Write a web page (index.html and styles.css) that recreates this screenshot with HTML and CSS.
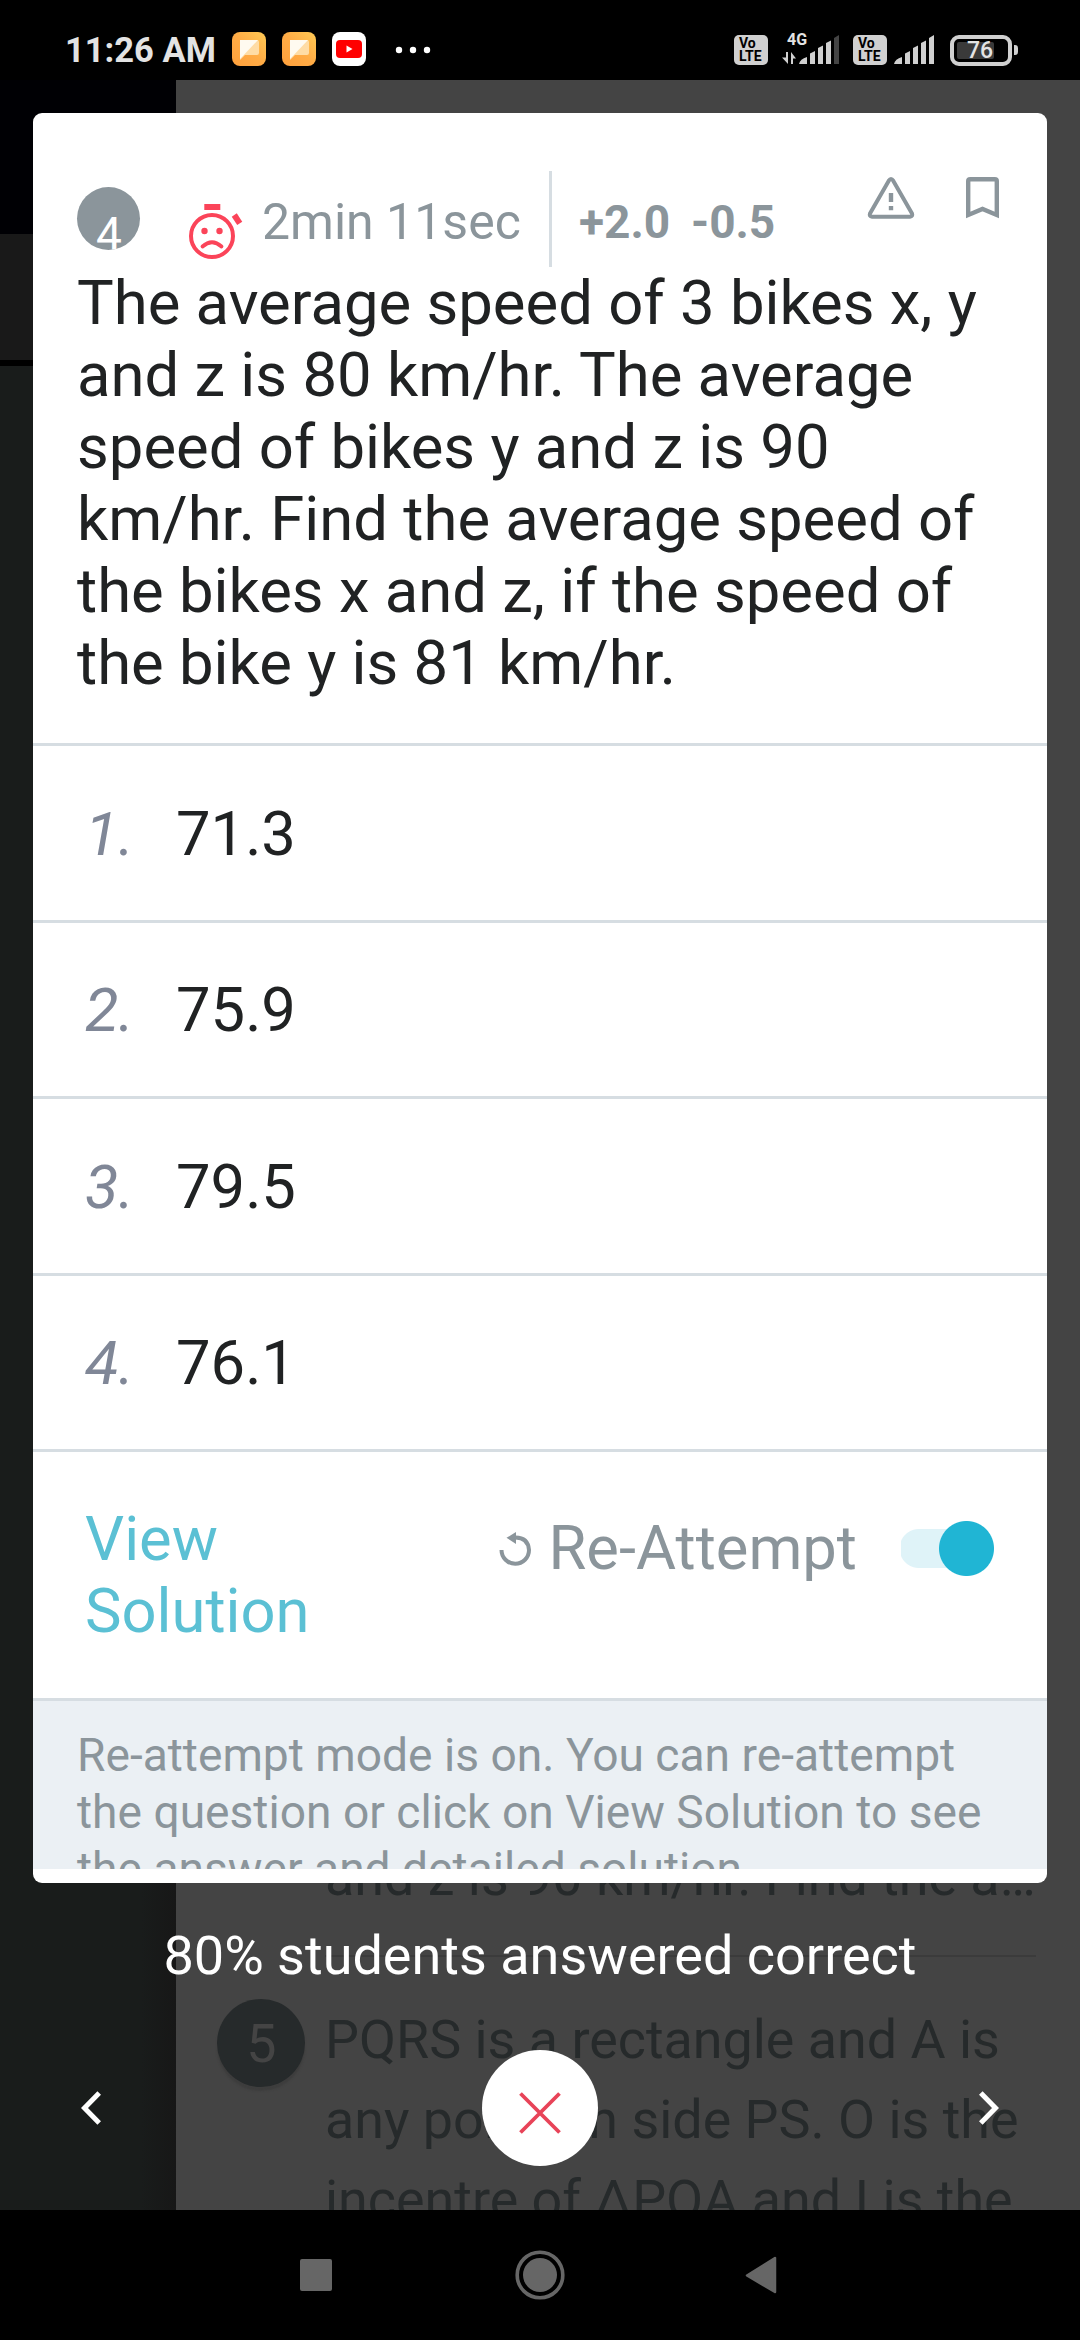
FILE: index.html
```html
<!DOCTYPE html>
<html lang="en">
<head>
<meta charset="utf-8">
<title>Question 4</title>
<link rel="stylesheet" href="styles.css">
</head>
<body>
<div class="screen">
  <header class="status">
    <span class="clock">11:26 AM</span>
    <svg class="app-icon" viewBox="0 0 34 34"><defs><linearGradient id="g" x1="1" y1="0" x2="0" y2="1"><stop offset="0" stop-color="#ffca55"/><stop offset=".5" stop-color="#ffab45"/><stop offset="1" stop-color="#ffa03c"/></linearGradient></defs><rect width="34" height="34" rx="8" fill="url(#g)"/><path d="M8 8H25a2 2 0 0 1 2 2V21a2 2 0 0 1-2 2H13L8 28Z" fill="#ffdca5"/><path d="M8 8H26L8 27Z" fill="#fffaf0"/></svg>
    <svg class="app-icon" viewBox="0 0 34 34"><rect width="34" height="34" rx="8" fill="url(#g)"/><path d="M8 8H25a2 2 0 0 1 2 2V21a2 2 0 0 1-2 2H13L8 28Z" fill="#ffdca5"/><path d="M8 8H26L8 27Z" fill="#fffaf0"/></svg>
    <svg class="app-icon" viewBox="0 0 34 34"><rect width="34" height="34" rx="8" fill="#fff"/><rect x="4" y="8" width="26" height="18" rx="4" fill="#f00"/><path d="M14.500 13.500v7l6-3.500z" fill="#fff"/></svg>
    <svg class="more" viewBox="0 0 36 8"><g fill="#fff"><circle cx="4" cy="4" r="3.200"/><circle cx="18" cy="4" r="3.200"/><circle cx="32" cy="4" r="3.200"/></g></svg>
    <div class="system">
      <div class="volte"><span>Vo</span><span>LTE</span></div>
      <div class="network">
        <span class="gen">4G</span>
        <svg viewBox="0 0 57 30"><g fill="#d0d0d0"><path d="M4 17h2v12L0 22.500h4zM9 29V17l5 6.500h-3V29z"/><path d="M17 29q1-5 8-7v7zM28 29V18.500l5-2.500v13zM36 29V13l5-2.500V29zM44 29V8l5-2.500V29z"/></g><path d="M52 29V3l5-3v29z" fill="#444"/></svg>
      </div>
      <div class="volte second"><span>Vo</span><span>LTE</span></div>
      <svg class="signal" viewBox="0 0 40 30"><path d="M0 29q1-5 8-7v7zM11 29V18.500l5-2.500v13zM19 29V13l5-2.500V29zM27 29V8l5-2.500V29zM35 29V3l5-3v29z" fill="#d0d0d0"/></svg>
      <div class="battery"><span>76</span></div><i class="tip"></i>
    </div>
  </header>

  <main class="app">
    <div class="page">
      <aside class="rail"><div class="rail-top"></div><div class="rail-tab"></div><div class="rail-rest"></div></aside>
      <section class="list">
        <p class="prev">and z is 90 km/hr. Find the a…</p>
        <div class="next">
          <span class="bubble">5</span>
          <p>PQRS is a rectangle and A is<br>any point on side PS. O is the<br>incentre of ΔPQA and I is the</p>
        </div>
      </section>
    </div>

    <div class="overlay">
      <article class="card">
        <div class="meta">
          <span class="number"><span>4</span></span>
          <svg class="timer" viewBox="0 0 54 58"><g fill="none" stroke="#fb4459" stroke-width="4"><circle cx="23" cy="34" r="21"/><path d="M13.500 44.500Q23 36 32.500 44.500" stroke-width="3.800" stroke-linecap="round"/></g><g fill="#fb4459"><circle cx="15.500" cy="29" r="3.200"/><circle cx="30.500" cy="29" r="3.200"/><rect x="15.300" y="2" width="16" height="6"/><rect x="45" y="12.200" width="6" height="10" transform="rotate(-33 48 17.200)"/></g></svg>
          <span class="time">2min 11sec</span>
          <span class="rule"></span>
          <b class="plus">+2.0</b><b class="minus">-0.5</b>
          <svg class="warn" viewBox="0 0 48 42"><path d="M21.800 3.700Q24 .3 26.200 3.700L45 36.500Q46 39.500 43 39.700H5Q2 39.500 3 36.500Z" fill="none" stroke="#8b959b" stroke-width="4" stroke-linejoin="round"/><path d="M21.800 16h4.400v9h-4.400zM21.800 29h4.400v4.200h-4.400z" fill="#8b959b"/></svg>
          <svg class="mark" viewBox="0 0 33 42"><path d="M2.200 38V4Q2.200 2.200 4.200 2.200H28.800Q30.800 2.200 30.800 4V38L16.500 32Z" fill="none" stroke="#8b959b" stroke-width="4.400"/></svg>
        </div>
        <p class="question">The average speed of 3 bikes x, y<br>and z is 80 km/hr. The average<br>speed of bikes y and z is 90<br>km/hr. Find the average speed of<br>the bikes x and z, if the speed of<br>the bike y is 81 km/hr.</p>
        <ol class="options">
          <li><i>1.</i><span>71.3</span></li>
          <li><i>2.</i><span>75.9</span></li>
          <li><i>3.</i><span>79.5</span></li>
          <li><i>4.</i><span>76.1</span></li>
        </ol>
        <div class="actions">
          <a class="view">View<br>Solution</a>
          <div class="retry">
            <svg viewBox="0 0 34 34"><path d="M15.500 5.500Q29 5 30 18A13.500 13.500 0 0 1 2.500 18" fill="none" stroke="#8b959b" stroke-width="4"/><path d="M17 0v12L7.500 5.800z" fill="#8b959b"/></svg>
            <span>Re-Attempt</span>
            <div class="toggle"></div>
          </div>
        </div>
        <div class="note">Re-attempt mode is on. You can re-attempt<br>the question or click on View Solution to see<br>the answer and detailed solution.</div>
      </article>
      <p class="stat">80% students answered correct</p>
      <div class="pager">
        <svg class="arrow" viewBox="0 0 20 34"><path d="M18.200 2L3.500 17L18.200 32" fill="none" stroke="#fff" stroke-width="5"/></svg>
        <div class="close"><svg viewBox="0 0 42 42"><path d="M1.500 1.500l39 39M40.500 1.500l-39 39" stroke="#e84358" stroke-width="3.800"/></svg></div>
        <svg class="arrow" viewBox="0 0 20 34"><path d="M1.800 2L16.500 17L1.800 32" fill="none" stroke="#fff" stroke-width="5"/></svg>
      </div>
    </div>
  </main>

  <nav class="keys">
    <svg viewBox="0 0 50 50"><rect x="9" y="9" width="32" height="32" rx="2" fill="#666"/></svg>
    <svg viewBox="0 0 50 50"><circle cx="25" cy="25" r="22.800" fill="none" stroke="#666" stroke-width="3.600"/><circle cx="25" cy="25" r="17" fill="#666"/></svg>
    <svg viewBox="0 0 50 50"><path d="M36 8V42L8 25.500Z" fill="#666" stroke="#666" stroke-width="2.500" stroke-linejoin="round"/></svg>
  </nav>
</div>
</body>
</html>
```
FILE: styles.css
```css
* { box-sizing: border-box; }
body { margin: 0; background: #000; font-family: Roboto, sans-serif; }
p, ol { margin: 0; padding: 0; }
svg { display: block; flex: none; }
.screen { width: 1080px; height: 2340px; display: flex; flex-direction: column; overflow: hidden; }

/* status bar */
.status { height: 80px; flex: none; display: flex; align-items: center; padding: 20px 62px 0 65px; color: #e3e3e3; }
.clock { width: 150px; margin-right: 17px; font-size: 34.500px; font-weight: 700; white-space: nowrap; }
.app-icon { width: 34px; height: 34px; margin-right: 16px; position: relative; top: -1px; }
.more { width: 36px; height: 8px; margin-left: 13px; }
.system { margin-left: auto; display: flex; align-items: center; }
.volte { width: 34px; height: 30px; background: #d0d0d0; color: #000; border-radius: 5px; font-size: 14px; line-height: 13px; font-weight: 700; padding: 2px 0 0 5px; display: flex; flex-direction: column; }
.network { width: 57px; margin: 0 14px; position: relative; }
.network svg { width: 57px; height: 30px; }
.gen { position: absolute; left: 5px; top: -4px; font-size: 16px; line-height: 18px; font-weight: 700; }
.signal { width: 40px; height: 30px; margin: 0 16px 0 7px; }
.battery { width: 62px; height: 31px; border: 4px solid #d0d0d0; border-radius: 9px; padding: 3px; }
.battery span { display: block; width: 37px; height: 17px; background: #3a3a3a; font-size: 23px; font-weight: 500; line-height: 18px; padding-left: 10px; border-radius: 2px; }
.tip { width: 4px; height: 10px; background: #d0d0d0; border-radius: 0 3px 3px 0; margin-left: 2px; }

/* dimmed list behind the dialog */
.app { height: 2130px; flex: none; display: grid; overflow: hidden; }
.page, .overlay { grid-area: 1 / 1; min-height: 0; height: 2130px; overflow: hidden; }
.page { display: grid; grid-template-columns: 176px 904px; background: #444; color: #262a2b; }
.rail { display: flex; flex-direction: column; background: #000; }
.rail-top { height: 154px; background: #000004; }
.rail-tab { height: 126px; background: #191919; margin-bottom: 6px; }
.rail-rest { flex: 1; background: linear-gradient(90deg, #191c1b 80%, #171717); }
.list { padding: 1757px 44px 0 41px; font-size: 53.850px; line-height: 80px; white-space: nowrap; }
.prev { margin-left: 108px; height: 120px; border-bottom: 2px solid #3b3b3b; }
.next { display: flex; gap: 20px; padding-top: 42px; }
.bubble { width: 88px; height: 88px; line-height: 90px; padding-left: 1px; flex: none; border-radius: 50%; background: #262a2b; color: #444; text-align: center; box-shadow: 0 4px 2px #3d3d3d; }
.next p { margin-top: 1px; }

/* dialog */
.overlay { display: flex; flex-direction: column; align-items: center; padding-top: 33px; }
.card { width: 1014px; height: 1770px; flex: none; background: #fff; border-radius: 9px; color: #202223; padding-bottom: 14px; display: flex; flex-direction: column; overflow: hidden; }
.meta { display: flex; align-items: flex-start; height: 154px; padding: 58px 48px 0 44px; color: #8b959b; flex: none; }
.number { width: 63px; height: 63px; margin-top: 16px; border-radius: 50%; background: #8b959b; color: #fff; overflow: hidden; flex: none; }
.number span { display: block; font-size: 46px; line-height: 54px; padding: 20px 0 0 19px; }
.timer { width: 54px; height: 58px; margin: 31px 0 0 49px; }
.time { width: 288px; margin: 21px 0 0 16px; padding-left: 3px; font-size: 50px; line-height: 60px; white-space: nowrap; }
.rule { width: 3px; height: 96px; background: #d6dde2; margin-right: 27px; margin-left: 2px; flex: none; }
.plus, .minus { font-size: 46px; line-height: 54px; margin-top: 24px; white-space: nowrap; }
.plus { width: 112px; }
.warn { width: 48px; height: 42px; margin: 6px 51px 0 auto; }
.mark { width: 33px; height: 42px; margin-top: 6px; }
.question { height: 479px; flex: none; padding: 0 0 0 44px; font-size: 61.600px; line-height: 72px; white-space: nowrap; border-bottom: 3px solid #d6dde2; }
.options { list-style: none; flex: none; }
.options li { height: 176.500px; border-bottom: 3px solid #d6dde2; display: flex; align-items: center; font-size: 61.500px; line-height: 72px; padding: 2px 0 0 52px; }
.options i { width: 91px; color: #808797; }
.actions { height: 249px; flex: none; border-bottom: 3px solid #d6dde2; padding: 50px 53px 0 52px; display: flex; font-size: 61.500px; line-height: 72px; color: #5bc0d4; }
.view { padding-top: 1px; }
.retry { margin-left: auto; display: flex; align-items: flex-start; color: #8b959b; white-space: nowrap; }
.retry svg { width: 34px; height: 34px; margin: 30px 15px 0 0; }
.retry span { margin-top: 10px; }
.toggle { width: 93px; height: 55px; margin: 19px 0 0 44px; background: radial-gradient(circle at 65.500px 27.500px, #20b5d4 27px, transparent 28px), linear-gradient(#dff3f8, #dff3f8) 18px 8px / 50px 39px no-repeat, radial-gradient(circle at 18px 27.500px, #dff3f8 19px, transparent 20px); }
.note { flex: 1; min-height: 0; overflow: hidden; background: #ebf0f4; color: #8b959b; font-size: 46.150px; line-height: 57px; padding: 26px 0 0 44px; white-space: nowrap; }

/* below the dialog */
.stat { margin-top: 40px; font-size: 54px; line-height: 66px; color: #fff; white-space: nowrap; }
.pager { width: 918px; display: flex; align-items: center; justify-content: space-between; margin-top: 61px; }
.arrow { width: 20px; height: 34px; }
.close { width: 116px; height: 116px; border-radius: 50%; background: #fff; display: flex; justify-content: center; padding-top: 42px; }
.close svg { width: 42px; height: 42px; }

.keys { height: 130px; flex: none; display: flex; justify-content: center; gap: 174px; padding-top: 40px; }
.keys svg { width: 50px; height: 50px; }
```
